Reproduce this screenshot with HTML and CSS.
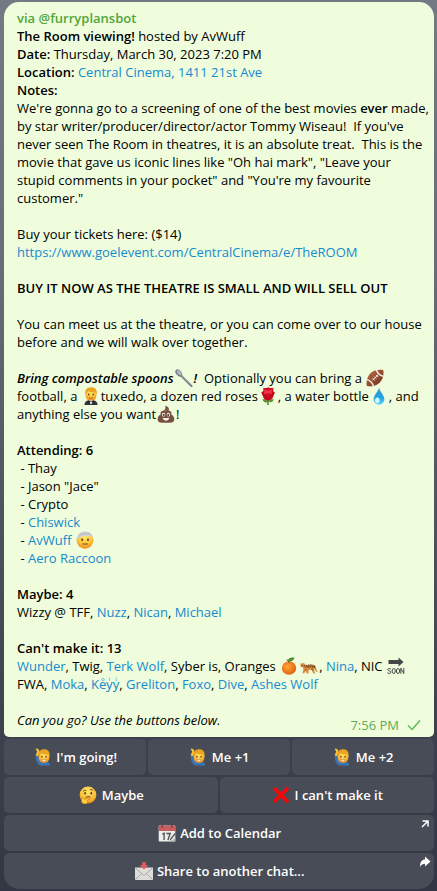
FILE: index.html
```html
<!DOCTYPE html>
<html lang="en">
<head>
<meta charset="utf-8">
<meta name="viewport" content="width=device-width, initial-scale=1">
<title>The Room viewing!</title>
<link rel="stylesheet" href="styles.css">
</head>
<body>
<svg class="sprite" aria-hidden="true">
  <defs>
    <radialGradient id="skin" cx=".5" cy=".3" r=".7"><stop offset="0" stop-color="#ffe56b"/><stop offset=".6" stop-color="#fdc63c"/><stop offset="1" stop-color="#ec8a1f"/></radialGradient>
    <linearGradient id="water" x1="0" y1="0" x2="0" y2="1"><stop offset="0" stop-color="#3c93bd"/><stop offset=".6" stop-color="#1fa3ea"/><stop offset="1" stop-color="#62d5fb"/></linearGradient>
    <radialGradient id="peel" cx=".4" cy=".4" r=".7"><stop offset="0" stop-color="#ffa63a"/><stop offset="1" stop-color="#dd5a0a"/></radialGradient>
    <linearGradient id="ball" x1="0" y1="0" x2="1" y2="1"><stop offset="0" stop-color="#c0714a"/><stop offset="1" stop-color="#6d2a16"/></linearGradient>
    <symbol id="spoon" viewBox="0 0 18 18">
      <path d="M5.5 6 16.5 17" stroke="#6e757f" stroke-width="2" stroke-linecap="round"/>
      <path d="M6 5.8 16.5 16.2" stroke="#b9bfc8" stroke-width=".8" stroke-linecap="round"/>
      <ellipse cx="3.8" cy="4" rx="2.6" ry="4.1" transform="rotate(-43 3.8 4)" fill="#747b86"/>
      <ellipse cx="4.2" cy="3.8" rx="1.6" ry="3" transform="rotate(-43 4.2 3.8)" fill="#b4bac4"/>
    </symbol>
    <symbol id="football" viewBox="0 0 18 18">
      <path d="M.8 16.9C-.2 11.6 1.6 6.600 5.300 3.500 8.600.8 13.200.1 17.200 1 18.100 5.400 17 10.600 13.300 14 9.800 17.200 5 18 .8 16.900Z" fill="url(#ball)"/>
      <path d="M1 10.600Q6 12 7.300 17.100M10.500 1Q12 6 17.200 7.300" fill="none" stroke="#f3ece5" stroke-width="1.500"/>
      <path d="M6.500 11.200 12 5.800M6.600 9.300l2 2M8.300 7.600l2 2M10 5.900l2 2" stroke="#f7eee7" stroke-width="1"/>
    </symbol>
    <symbol id="tuxedo" viewBox="0 0 18 18">
      <path d="M2.500 18c0-3 1.600-4.200 4-4.700h5c2.400.5 4 1.700 4 4.700z" fill="#30343b"/>
      <path d="M6.500 13 9 17.800 11.500 13z" fill="#f4f4f4"/>
      <path d="m9 14.600-2.600-1.300v2.600zm0 0 2.600-1.300v2.600z" fill="#15171b"/>
      <rect x="3.600" y="1.300" width="10.800" height="12.400" rx="5" fill="url(#skin)"/>
      <path d="M3.400 7.500C2.600 2.500 5 .3 9 .2s6.600 2.100 5.700 7.300l-1.200-2.300C10 5.600 7.500 4.800 6 3.700 5.700 5.300 4.300 5.700 3.400 7.500Z" fill="#eaa51f"/>
      <ellipse cx="6.800" cy="7.600" rx=".7" ry="1" fill="#5b3813"/><ellipse cx="11.200" cy="7.600" rx=".7" ry="1" fill="#5b3813"/>
      <path d="M7 10.700q2 1.300 4 0" fill="none" stroke="#a45516" stroke-width=".9"/>
    </symbol>
    <symbol id="rose" viewBox="0 0 18 18">
      <path d="M8.300 9h1.500v9H8.300z" fill="#4b7c2c"/>
      <path d="M8.800 15.500C6 16 4.300 14.800 3.500 12.500c3-.5 4.500.3 5.300 3Zm.6-.8c1-2.200 2.800-2.900 5.300-2.200-.8 2.400-2.500 3.300-5.300 2.200Z" fill="#599334"/>
      <path d="M4.300.7Q8 1.500 9.300.2q2.200 1.300 5.200.6l-.2 3.400 1.500 1.500-2.600 6.400Q9 15 5 12L2.300 5.500l2-1.500Z" fill="#d30b22"/>
      <path d="M5.200 2.200Q9.300 5 13.700 2 12 5.500 12.700 7.500 9.500 5 5.200 7.500Z" fill="#f3324a"/>
      <path d="M2.800 5.800Q6.800 8 9 13.300 10.800 8.600 15.500 6" fill="none" stroke="#8d0718" stroke-width=".8"/>
    </symbol>
    <symbol id="drop" viewBox="0 0 18 18">
      <path d="M9 .5C8 5 3.600 8.300 3.600 12.300A5.400 5.400 0 0 0 14.400 12.300C14.400 8.300 10 5 9 .5Z" fill="url(#water)"/>
      <ellipse cx="7.300" cy="13.300" rx="2.200" ry="2.800" fill="#d3f6ff"/>
    </symbol>
    <symbol id="poop" viewBox="0 0 18 18">
      <path d="M8 .7c3 .4 4.700 2.400 3.600 4.800 2.600.5 3.400 2.300 2.600 4.100 3.700 1.400 4.300 7.400.5 7.800-3.500.6-8.500.6-11.700 0-3.500-.6-3-6.600.7-7.800-.8-2 .7-3.600 2.700-4.100C8.500 4.500 9 2.500 8 .7Z" fill="#77513f"/>
      <path d="M4.800 9.500q4.500 1.200 7-1.300M6.500 5.700q2.600.7 4-1.200" fill="none" stroke="#a37962" stroke-width=".9"/>
      <ellipse cx="6.600" cy="9.700" rx="1.600" ry="1.900" fill="#f4f1ef"/><ellipse cx="11.400" cy="9.700" rx="1.600" ry="1.900" fill="#f4f1ef"/>
      <circle cx="6.800" cy="9.900" r=".9" fill="#2a1b16"/><circle cx="11.200" cy="9.900" r=".9" fill="#2a1b16"/>
      <path d="M5.500 13h7q-1 2.800-3.500 2.800T5.500 13Z" fill="#f4f1ef"/>
    </symbol>
    <symbol id="bandage" viewBox="0 0 18 18">
      <circle cx="9" cy="9.300" r="8.400" fill="url(#skin)"/>
      <path d="M.5 8.300C1 3 5 .4 9.300.5c4 .1 7.200 2.700 8.100 6.600C14.500 4.800 11 4.200 7.500 5.200 4.500 6 2.300 7 .5 8.300Z" fill="#d5d8dc"/>
      <path d="M1.800 5.600Q8.500 1.600 16 4.300M3.600 3Q8.500 1 13.800 2.100" fill="none" stroke="#aeb3ba" stroke-width=".7"/>
      <ellipse cx="6.200" cy="8.700" rx=".9" ry="1.200" fill="#603914"/><ellipse cx="12" cy="8.700" rx=".9" ry="1.200" fill="#603914"/>
      <path d="M6.300 13h5.500" fill="none" stroke="#7b4515" stroke-width="1"/>
    </symbol>
    <symbol id="orange" viewBox="0 0 18 18">
      <ellipse cx="9" cy="11" rx="7.200" ry="6.700" fill="url(#peel)"/>
      <path d="M9 5.500Q8.500 3.500 6.700 2.500" fill="none" stroke="#60451c" stroke-width="1"/>
      <path d="M7.500 4.300C8 1 11.500-.3 14.500.8 13.500 4 10.500 5.300 7.500 4.300Z" fill="#538c2d"/>
    </symbol>
    <symbol id="tiger" viewBox="0 0 18 18">
      <path d="M.5 7.300q.6-2 1.700-.6 1.300-1.500 2.700.2l1 1q4-.8 7.300-.2c2 .1 2.500 1 2.800 3.100q.4 2.500 1.700 3.700l-1 .5q-2-1.200-2-3.200l-.6 1.200 1 3.800h-1.700l-1.800-4-2.900-.1-.3 4H6.600l-.7-4-1.700 4H2.500l1-5Q3.300 11 2 11 .3 10 .5 7.300Z" fill="#d88838"/>
      <path d="M1.200 10h1.600v1H1.500zm1.900 6h1.300v.8H2.500zm4 0h1.200v.8H6.800zm6 0h1.200v.8h-1.500z" fill="#fff1d8"/>
      <path d="m6.500 8 .8 2.500M8.700 7.600l.3 3M11 7.500l-.2 2.800M13.200 8l-.8 2.700M4.500 8.500l1 1.700M5 13l1 .5M11.500 12.500l1.200.5M14.700 9l-.7 2" stroke="#3d291d" stroke-width=".8"/>
      <circle cx="2" cy="8.400" r=".5" fill="#21150e"/>
    </symbol>
    <symbol id="soon" viewBox="0 0 18 18">
      <path d="M1.500 3h10V.4L16.500 5l-5 4.600V7h-10z" fill="#454746"/>
      <path d="M3.900 12.300q-.6-1-1.700-.8-1.500.2-1.300 1.300.2.800 1.400 1.100 1.500.3 1.500 1.400 0 1.200-1.500 1.200-1.400 0-1.800-1.100M13.800 16.800V11.200l3 5.300V11" fill="none" stroke="#454746" stroke-width="1"/>
      <ellipse cx="6.700" cy="14" rx="1.600" ry="2.500" fill="none" stroke="#454746" stroke-width="1"/>
      <ellipse cx="11" cy="14" rx="1.600" ry="2.500" fill="none" stroke="#454746" stroke-width="1"/>
    </symbol>
    <symbol id="raise" viewBox="0 0 18 18">
      <path d="M1.600 6.500 4 6.200q0 5.500 3 7.300h4.500q4.500.5 5 4H6Q1.500 14.800 1.600 6.500Z" fill="#3976b9"/>
      <path d="M1.700 7.500 3.200 3.300 1.600 1.200q.8-1 2.400-.3 1.700 1 1.300 3L4.400 8Z" fill="#fdc43b"/>
      <rect x="4.700" y="2.700" width="10.600" height="12.300" rx="5" fill="url(#skin)"/>
      <path d="M4.700 9.400C3.700 4 6 1.300 10 1.300s6.500 2.600 5.400 8.100l-1-2.900Q9.500 7 7 5 6.700 7 4.700 9.400Z" fill="#e9a51f"/>
      <ellipse cx="7.900" cy="8.800" rx=".7" ry="1" fill="#5b3813"/><ellipse cx="12.100" cy="8.800" rx=".7" ry="1" fill="#5b3813"/>
      <path d="M7.700 11.500h4.600q-.5 2-2.300 2t-2.300-2Z" fill="#fff8e9" stroke="#9e571b" stroke-width=".4"/>
    </symbol>
    <symbol id="think" viewBox="0 0 18 18">
      <circle cx="9" cy="9" r="8.400" fill="url(#skin)"/>
      <path d="M4 5.200q1.500-1.400 3.300-.5M11 3.800q2-.8 3.300.8" fill="none" stroke="#754313" stroke-width=".9"/>
      <ellipse cx="6.100" cy="7.300" rx=".9" ry="1.200" fill="#603914"/><ellipse cx="12.300" cy="7.300" rx=".9" ry="1.200" fill="#603914"/>
      <path d="M6.500 11.300q2.500-1.200 5-.2" fill="none" stroke="#7b4515" stroke-width="1"/>
      <path d="M2.800 12.300q.7-1.700 1.700-.4l.8 1.400 5.200-1.500q1.500.2.300 1.200l-2.500 1.200q1.300 3-1.500 3.700-3.400.5-4.200-2Z" fill="#ffce43" stroke="#d37916" stroke-width=".7"/>
    </symbol>
    <symbol id="cross" viewBox="0 0 18 18">
      <path d="M3.300.7 9 6.300 14.700.7l2.600 2.600L11.700 9l5.600 5.700-2.600 2.600L9 11.700l-5.700 5.600-2.600-2.600L6.300 9 .7 3.300z" fill="#f00a0a"/>
    </symbol>
    <symbol id="calendar" viewBox="0 0 18 18">
      <rect x=".7" y="1.500" width="16.600" height="16" rx="1" fill="#ececec"/>
      <path d="M.7 7V2.500q0-1 1-1h14.600q1 0 1 1V7z" fill="#c85d5e"/>
      <path d="M4.200.4v3.300M13.800.4v3.300" stroke="#613d41" stroke-width="1.200"/>
      <path d="m4.300 10.200 1.800-1V16M8.400 9.500h3.800L9.900 16" fill="none" stroke="#4d4d50" stroke-width="1.300"/>
      <path d="m11.500 16.800.8-2.400L16.700 9l1 .9-4.500 5.600z" fill="#55565a"/>
      <path d="M11 17.500h6.300V14z" fill="#b9babd"/>
    </symbol>
    <symbol id="envelope" viewBox="0 0 18 18">
      <path d="M0 5.500h18V18H0z" fill="#deddd9"/>
      <path d="m.3 17.700 6.400-6.300M17.700 17.700l-6.400-6.300M.3 5.800 9 13.500l8.700-7.700" fill="none" stroke="#a7a6a5" stroke-width=".9"/>
      <path d="M7.300 0h3.400v3.200h2.600L9 7.600 4.700 3.200h2.600z" fill="#e35c5f"/>
    </symbol>
  </defs>
</svg>

<main class="chat">
  <article class="message">
    <p><a class="via" href="#">via @furryplansbot</a></p>
    <p><b>The Room viewing!</b> hosted by AvWuff</p>
    <p><b>Date:</b> Thursday, March 30, 2023 7:20 PM</p>
    <p><b>Location:</b> <a href="#">Central Cinema, 1411 21st Ave</a></p>
    <p><b>Notes:</b></p>
    <p class="block">We're gonna go to a screening of one of the best movies <b>ever</b> made, by star writer/producer/director/actor Tommy Wiseau!&nbsp; If you've never seen The Room in theatres, it is an absolute treat.&nbsp; This is the movie that gave us iconic lines like "Oh hai mark", "Leave your stupid comments in your pocket" and "You're my favourite customer."</p>
    <p>Buy your tickets here: ($14)</p>
    <p class="block"><a href="#">https://www.goelevent.com/CentralCinema/e/TheROOM</a></p>
    <p class="block"><b>BUY IT NOW AS THE THEATRE IS SMALL AND WILL SELL OUT</b></p>
    <p class="block">You can meet us at the theatre, or you can come over to our house before and we will walk over together.</p>
    <p class="block"><b><i>Bring compostable spoons<svg class="emoji" aria-hidden="true"><use href="#spoon"/></svg>!</i></b>&nbsp; Optionally you can bring a <svg class="emoji" aria-hidden="true"><use href="#football"/></svg> football, a <svg class="emoji" aria-hidden="true"><use href="#tuxedo"/></svg>tuxedo, a dozen red roses<svg class="emoji" aria-hidden="true"><use href="#rose"/></svg>, a water bottle<svg class="emoji" aria-hidden="true"><use href="#drop"/></svg>, and anything else you want<svg class="emoji" aria-hidden="true"><use href="#poop"/></svg>!</p>
    <p><b>Attending: 6</b></p>
    <ul class="block names">
      <li>Thay</li>
      <li>Jason "Jace"</li>
      <li>Crypto</li>
      <li><a href="#">Chiswick</a></li>
      <li><a href="#">AvWuff <svg class="emoji" aria-hidden="true"><use href="#bandage"/></svg></a></li>
      <li><a href="#">Aero Raccoon</a></li>
    </ul>
    <p><b>Maybe: 4</b></p>
    <p class="block">Wizzy @ TFF, <a href="#">Nuzz</a>, <a href="#">Nican</a>, <a href="#">Michael</a></p>
    <p><b>Can't make it: 13</b></p>
    <p class="block">
      <a href="#">Wunder</a>, Twig, <a href="#">Terk Wolf</a>, Syber is, Oranges <svg class="emoji" aria-hidden="true"><use href="#orange"/></svg><svg class="emoji" aria-hidden="true"><use href="#tiger"/></svg>, <a href="#">Nina</a>, NIC <svg class="emoji" aria-hidden="true"><use href="#soon"/></svg> FWA, <a href="#">Moka</a>, <a href="#">Keͦyͥyͥ</a>, <a href="#">Greliton</a>, <a href="#">Foxo</a>, <a href="#">Dive</a>, <a href="#">Ashes Wolf</a>
    </p>
    <footer class="closing">
      <p class="prompt"><i>Can you go? Use the buttons below.</i></p>
      <div class="status">
        <time datetime="19:56">7:56 PM</time>
        <svg class="check" viewBox="0 0 14 12" aria-hidden="true"><path d="m1 6.500 4 4L13 1.500"/></svg>
      </div>
    </footer>
  </article>

  <div class="row">
    <button type="button"><svg class="emoji" aria-hidden="true"><use href="#raise"/></svg> I'm going!</button>
    <button type="button"><svg class="emoji" aria-hidden="true"><use href="#raise"/></svg> Me +1</button>
    <button type="button"><svg class="emoji" aria-hidden="true"><use href="#raise"/></svg> Me +2</button>
  </div>
  <div class="row">
    <button type="button"><svg class="emoji" aria-hidden="true"><use href="#think"/></svg> Maybe</button>
    <button type="button"><svg class="emoji" aria-hidden="true"><use href="#cross"/></svg> I can't make it</button>
  </div>
  <div class="row">
    <button type="button"><svg class="emoji" aria-hidden="true"><use href="#calendar"/></svg> Add to Calendar
      <svg class="corner" viewBox="0 0 12 12" aria-hidden="true"><path d="M3.500 3h5.500v5.500M9 3 3 9" fill="none" stroke="#fff" stroke-width="1.500"/></svg>
    </button>
  </div>
  <div class="row last">
    <button type="button"><svg class="emoji" aria-hidden="true"><use href="#envelope"/></svg> Share to another chat...
      <svg class="corner" viewBox="0 0 12 12" aria-hidden="true"><path d="M6 .5 11.500 5.500 6 10.500V7.700Q2.800 7.700 1 11 .8 4 6 3.300Z" fill="#fff"/></svg>
    </button>
  </div>
</main>
</body>
</html>
```

FILE: styles.css
```css
* {
  box-sizing: border-box;
}

body {
  margin: 0;
  min-height: 100vh;
  background: linear-gradient(#737a83 0, #686d79 30%, #4d505d 60%, #3d414d 82%, #333744 100%);
  font: 13px/18px "Open Sans", "Noto Sans", "DejaVu Sans", sans-serif;
  color: #000;
}

.sprite {
  position: absolute;
  width: 0;
  height: 0;
}

.chat {
  display: flex;
  flex-direction: column;
  gap: 2px;
  padding: 2px 3px 2px 4px;
}

.message {
  padding: 7px 5px 3px 13px;
  border-radius: 15px 15px 5px 5px;
  background: #effddd;
}

p,
ul {
  margin: 0;
  padding: 0;
}

b {
  font-weight: 600;
}

a {
  color: #168acd;
  text-decoration: none;
}

.via {
  color: #4ea63c;
  font-weight: 600;
}

.block {
  margin-bottom: 18px;
}

.names {
  list-style: none;
}

.names li::before {
  content: "\00a0- ";
}

.emoji {
  width: 18px;
  height: 18px;
  margin: 0 1px;
  vertical-align: -4px;
}

.closing {
  display: flex;
  justify-content: space-between;
  align-items: flex-end;
  padding-right: 8px;
}

.prompt {
  padding-bottom: 5px;
}

.status {
  display: flex;
  align-items: center;
  gap: 8px;
  color: #62ac55;
}

.check {
  width: 14px;
  height: 12px;
  fill: none;
  stroke: #5dbb54;
  stroke-width: 1.5;
}

.row {
  display: flex;
  gap: 2px;
}

.row button {
  position: relative;
  flex: 1;
  height: 36px;
  padding: 0;
  border: 0;
  border-radius: 5px;
  background: #484c57;
  color: #fff;
  font: inherit;
  font-weight: 600;
}

.row.last button {
  border-radius: 5px 5px 15px 15px;
}

.corner {
  position: absolute;
  top: 3px;
  right: 3px;
  width: 12px;
  height: 12px;
}
```
